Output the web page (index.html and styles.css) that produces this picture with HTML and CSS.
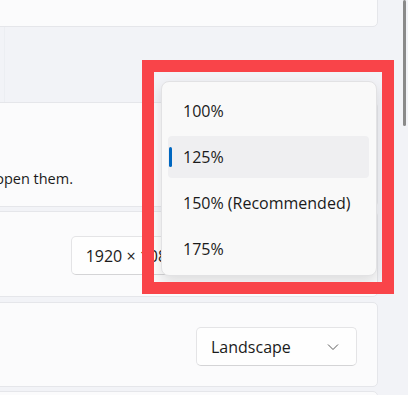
FILE: index.html
```html
<!DOCTYPE html>
<html>
<head>
<meta charset="utf-8">
<link rel="stylesheet" href="styles.css">
</head>
<body>
<div class="page">
  <div class="card card-top"></div>
  <div class="section-gap"></div>
  <div class="card card-scale">
    <div class="desc-row"><span class="desc">Some apps won't respond to scaling changes until you close and reopen them.</span></div>
  </div>
  <div class="card card-row card-res">
    <div class="combo"><span>1920 × 1080 (Recommended)</span>
      <svg class="chev" width="12" height="12" viewBox="0 0 12 12"><path d="M1 3.5 L6 8.5 L11 3.5" /></svg>
    </div>
  </div>
  <div class="card card-row card-orient">
    <div class="combo"><span>Landscape</span>
      <svg class="chev" width="12" height="12" viewBox="0 0 12 12"><path d="M1 3.5 L6 8.5 L11 3.5" /></svg>
    </div>
  </div>
  <div class="card card-next"></div>
</div>

<div class="scrollbar"></div>

<div class="menu">
  <div class="item">100%</div>
  <div class="item selected">125%</div>
  <div class="item">150% (Recommended)</div>
  <div class="item">175%</div>
</div>

<div class="highlight-box"></div>
</body>
</html>
```
FILE: styles.css
```css
html, body {
  margin: 0;
  padding: 0;
}
body {
  background: #f2f3f7;
  font-family: "Open Sans", "Noto Sans", sans-serif;
  color: #1b1b1b;
  width: 408px;
  height: 395px;
  overflow: hidden;
  position: relative;
}
.page {
  margin-left: -10px;
  width: 388px;
  display: flex;
  flex-direction: column;
}
.card {
  background: #fbfbfc;
  border: 1px solid #e5e6ea;
  border-radius: 5px;
  box-sizing: border-box;
}
.card-top {
  height: 40px;
  margin-top: -13px;
}
.section-gap {
  height: 75px;
  margin-left: 14px;
  border-left: 1px solid #eceef2;
}
.card-scale {
  height: 105px;
  padding-top: 66px;
}
.desc-row {
  width: 82px;
  display: flex;
  justify-content: flex-end;
  white-space: nowrap;
}
.desc {
  font-size: 14.5px;
  line-height: 20px;
}
.card-row {
  display: flex;
  justify-content: flex-end;
  align-items: flex-start;
  padding: 24px 20px 0 0;
}
.card-res {
  margin-top: 4px;
  height: 86px;
}
.card-orient {
  margin-top: 5px;
  height: 85px;
}
.card-next {
  margin-top: 4px;
  height: 40px;
}
.combo {
  box-sizing: border-box;
  height: 39px;
  min-width: 161px;
  display: flex;
  align-items: center;
  justify-content: space-between;
  gap: 24px;
  padding: 0 17px 0 14px;
  background: #fefefe;
  border: 1px solid #e4e4e6;
  border-bottom-color: #d4d4d6;
  border-radius: 5px;
  font-size: 16px;
  white-space: nowrap;
}
.chev path {
  fill: none;
  stroke: #5c5c5c;
  stroke-width: 1;
}
.scrollbar {
  position: absolute;
  left: 403px;
  top: 0;
  width: 3px;
  height: 126px;
  border-radius: 2px;
  background: #8a8a8a;
}
.menu {
  position: absolute;
  left: 161px;
  top: 81px;
  width: 216px;
  height: 195px;
  box-sizing: border-box;
  background: #f9f9f9;
  border: 1px solid #e2e2e4;
  border-radius: 8px;
  box-shadow: 0 6px 14px rgba(0, 0, 0, 0.12);
  padding: 8px 7px 5px 6px;
  display: flex;
  flex-direction: column;
  gap: 4px;
}
.item {
  position: relative;
  height: 42px;
  display: flex;
  align-items: center;
  padding-left: 15px;
  border-radius: 4px;
  font-size: 16px;
  white-space: nowrap;
}
.item.selected {
  background: #efeff1;
}
.item.selected::before {
  content: "";
  position: absolute;
  left: 1px;
  top: 11px;
  width: 3px;
  height: 20px;
  border-radius: 2px;
  background: #0067c0;
}
.highlight-box {
  position: absolute;
  left: 142px;
  top: 60px;
  width: 252px;
  height: 234px;
  box-sizing: border-box;
  border: 12px solid #f94449;
}
```
